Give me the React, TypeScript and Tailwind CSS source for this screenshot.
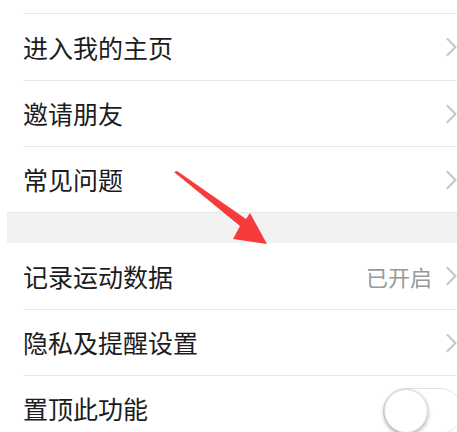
import React from "react";

const Chevron = () => (
  <svg width="11" height="20" viewBox="0 0 11 20" className="shrink-0">
    <polyline
      points="1.5,2 9.5,10 1.5,18"
      fill="none"
      stroke="#c7c7cc"
      strokeWidth="2.2"
      strokeLinecap="round"
      strokeLinejoin="round"
    />
  </svg>
);

const Row = ({
  label,
  right,
  first,
}: {
  label: string;
  right?: React.ReactNode;
  first?: boolean;
}) => (
  <div className={`ml-[23px] h-[66px] flex items-center justify-between ${first ? "" : "border-t border-[#e8e8e8]"}`}>
    <span className="text-[25px] leading-none text-[#1c1c1c]">{label}</span>
    {right ?? <Chevron />}
  </div>
);

const App = () => {
  return (
    <div
      className="relative w-[457px] h-[432px] overflow-hidden bg-white"
      style={{ fontFamily: '"Noto Sans CJK SC", "Noto Sans", sans-serif' }}
    >
      <div className="h-[13px]" />
      <div className="ml-[23px] border-t border-[#e8e8e8]" />
      <Row label="进入我的主页" first />
      <Row label="邀请朋友" />
      <Row label="常见问题" />
      <div className="ml-[7px] h-[31px] bg-[#f2f2f2] border-t border-[#e6e6e6]" />
      <Row
        label="记录运动数据"
        first
        right={
          <div className="flex items-center gap-[14px]">
            <span className="text-[22px] leading-none text-[#999999]">已开启</span>
            <Chevron />
          </div>
        }
      />
      <Row label="隐私及提醒设置" />
      <Row
        label="置顶此功能"
        right={
          <div className="mr-[-6px] mt-[4px] w-[80px] h-[46px] rounded-full border-[1.5px] border-[#e2e2e2] bg-white flex items-center">
            <div className="w-[44px] h-[44px] rounded-full bg-white shadow-[0_2px_4px_rgba(0,0,0,0.3)] border border-[#d8d8d8]" />
          </div>
        }
      />
      <svg className="absolute left-0 top-0" width="457" height="432" viewBox="0 0 457 432">
        <polygon
          points="174,172 177,171 246,219 250,213 267,244 233,239 240,226"
          fill="#f53b3b"
        />
      </svg>
    </div>
  );
};

export default App;
